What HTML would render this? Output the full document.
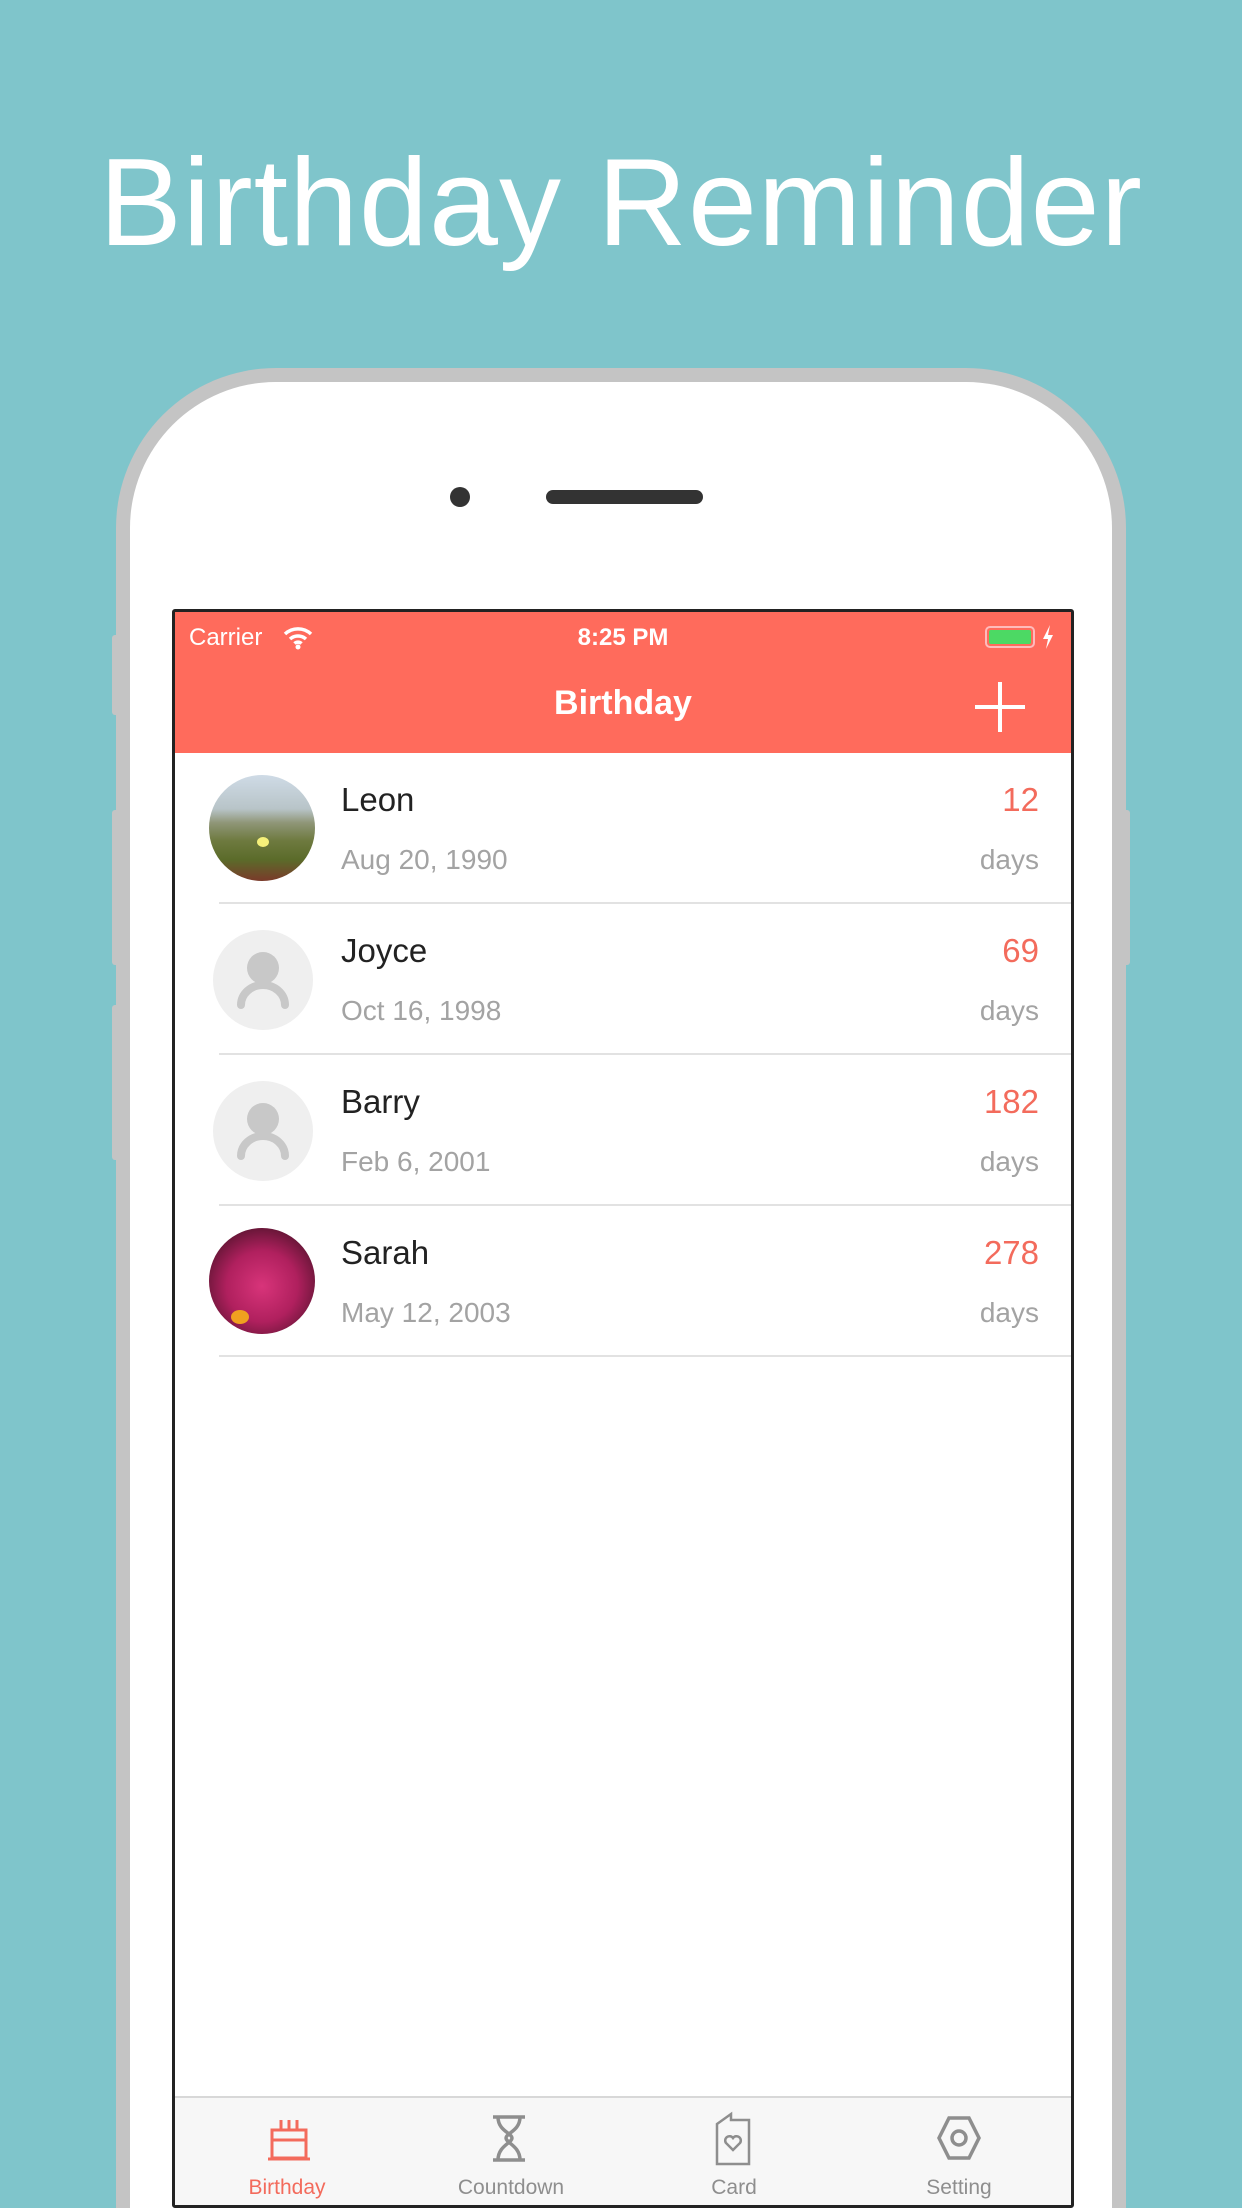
<!DOCTYPE html>
<html style="width:1242px;height:2208px;overflow:hidden"><head><meta charset="utf-8"><style>
*{margin:0;padding:0;box-sizing:border-box}
html,body{width:1242px;height:2208px;overflow:hidden}
body{background:#7fc5cb;font-family:"Liberation Sans",sans-serif}
#wrap{position:relative;width:1242px;height:2208px;overflow:hidden}
.title{position:absolute;left:0;width:1242px;top:128px;text-align:center;color:#fff;font-size:124px;line-height:150px;letter-spacing:1px}
.phone{position:absolute;left:116px;top:368px;width:1010px;height:1840px;border:14px solid #c4c4c4;border-bottom:none;border-radius:160px 160px 0 0;background:#fff}
.cam{position:absolute;left:450px;top:487px;width:20px;height:20px;border-radius:50%;background:#333}
.spk{position:absolute;left:546px;top:490px;width:157px;height:14px;border-radius:7px;background:#333}
.btn{position:absolute;width:8px;background:#c4c4c4;border-radius:3px}
.screen{position:absolute;left:172px;top:609px;width:902px;height:1599px;border:3px solid #222;background:#fff;overflow:hidden;border-radius:3px}
.nav{position:absolute;left:0;top:0;width:100%;height:141px;background:#ff6b5c;color:#fff}
.row{position:absolute;left:0;width:100%;height:151px}
.av{position:absolute;left:34px;top:22px;width:106px;height:106px;border-radius:50%;overflow:hidden}
.name{position:absolute;left:166px;top:28px;font-size:33px;color:#222}
.date{position:absolute;left:166px;top:91px;font-size:28px;color:#a3a3a3}
.num{position:absolute;right:32px;top:28px;font-size:33px;color:#f36b5c}
.days{position:absolute;right:32px;top:91px;font-size:28px;color:#a3a3a3}
.sep{position:absolute;left:44px;right:0;bottom:0;height:2px;background:#e2e2e2}
.tab{position:absolute;left:0;top:1484px;width:100%;height:115px;background:#f7f7f7;border-top:2px solid #d8d8d8}
.tl{position:absolute;top:78px;width:200px;text-align:center;font-size:21px;color:#8e8e8e}
</style></head><body><div id="wrap">
<div class="title">Birthday Reminder</div>
<div class="phone"></div>
<div class="btn" style="left:112px;top:635px;height:80px"></div>
<div class="btn" style="left:112px;top:810px;height:155px"></div>
<div class="btn" style="left:112px;top:1005px;height:155px"></div>
<div class="btn" style="left:1122px;top:810px;height:155px"></div>
<div class="cam"></div><div class="spk"></div>
<div class="screen">
 <div class="nav">
  <div style="position:absolute;left:14px;top:12px;font-size:24px">Carrier</div>
  <svg style="position:absolute;left:108px;top:14px" width="30" height="24" viewBox="0 0 30 24"><path d="M2 8a19 19 0 0 1 26 0M7 13a12 12 0 0 1 16 0M11.5 17.5a5 5 0 0 1 7 0" stroke="#fff" stroke-width="3.5" fill="none"/><circle cx="15" cy="21" r="2.5" fill="#fff"/></svg>
  <div style="position:absolute;left:0;width:100%;top:12px;text-align:center;font-size:24px;font-weight:bold">8:25 PM</div>
  <div style="position:absolute;left:810px;top:14px;width:50px;height:22px;border:2px solid #fbb;border-radius:5px;padding:2px"><div style="width:100%;height:100%;background:#4cd964;border-radius:2px"></div></div>
  <svg style="position:absolute;left:866px;top:12px" width="14" height="26" viewBox="0 0 14 26"><path d="M9 1L2 15h5l-2 10 7-14H7z" fill="#fff"/></svg>
  <div style="position:absolute;left:0;width:100%;top:72px;text-align:center;font-size:34px;font-weight:bold">Birthday</div>
  <svg style="position:absolute;left:798px;top:68px" width="54" height="54" viewBox="0 0 54 54"><path d="M27 2v50M2 27h50" stroke="#fff" stroke-width="4"/></svg>
 </div>
 <div class="row" style="top:141px">
  <div class="av" style="background:linear-gradient(180deg,#cfdbe6 0%,#b8c4c8 32%,#8f9678 45%,#6e7a3f 62%,#5b6b2a 80%,#7a3a2a 100%)"><div style="position:absolute;left:48px;top:62px;width:12px;height:10px;border-radius:50%;background:#f5f07a"></div></div>
  <div class="name">Leon</div><div class="date">Aug 20, 1990</div><div class="num">12</div><div class="days">days</div><div class="sep"></div>
 </div>
 <div class="row" style="top:292px">
  <div class="av" style="background:#efefef;left:38px;top:26px;width:100px;height:100px"><svg width="100" height="100" viewBox="0 0 100 100"><circle cx="50" cy="38" r="16" fill="#c8c8c8"/><path d="M28 75a22 20 0 0 1 44 0" stroke="#c8c8c8" stroke-width="8" fill="none" stroke-linecap="round"/></svg></div>
  <div class="name">Joyce</div><div class="date">Oct 16, 1998</div><div class="num">69</div><div class="days">days</div><div class="sep"></div>
 </div>
 <div class="row" style="top:443px">
  <div class="av" style="background:#efefef;left:38px;top:26px;width:100px;height:100px"><svg width="100" height="100" viewBox="0 0 100 100"><circle cx="50" cy="38" r="16" fill="#c8c8c8"/><path d="M28 75a22 20 0 0 1 44 0" stroke="#c8c8c8" stroke-width="8" fill="none" stroke-linecap="round"/></svg></div>
  <div class="name">Barry</div><div class="date">Feb 6, 2001</div><div class="num">182</div><div class="days">days</div><div class="sep"></div>
 </div>
 <div class="row" style="top:594px">
  <div class="av" style="background:radial-gradient(circle at 50% 55%,#d8347a 0%,#b0205e 45%,#5a1430 80%,#2a1a18 100%)"><div style="position:absolute;left:22px;top:82px;width:18px;height:14px;border-radius:50%;background:#f0a020"></div></div>
  <div class="name">Sarah</div><div class="date">May 12, 2003</div><div class="num">278</div><div class="days">days</div><div class="sep"></div>
 </div>
 <div class="tab">
  <svg style="position:absolute;left:89px;top:18px" width="50" height="46" viewBox="0 0 50 46" fill="none" stroke="#f36b5c" stroke-width="3"><path d="M8 14h34v28H8zM8 24h34M4 43h42M17 4v10M25 4v10M33 4v10"/></svg>
  <div class="tl" style="left:12px;color:#f36b5c">Birthday</div>
  <svg style="position:absolute;left:314px;top:16px" width="40" height="50" viewBox="0 0 40 50" fill="none" stroke="#8e8e8e" stroke-width="3.5"><path d="M4 3h32M4 46h32M9 3c0 14 14 16 14 21S9 32 9 46M31 3c0 14-14 16-14 21s14 8 14 22"/></svg>
  <div class="tl" style="left:236px">Countdown</div>
  <svg style="position:absolute;left:538px;top:12px" width="40" height="56" viewBox="0 0 40 56" fill="none" stroke="#8e8e8e" stroke-width="2.5"><path d="M4 14l14-10v6h18v44H4zM4 14v40"/><path d="M20 40l-7-7a4 4 0 0 1 7-5 4 4 0 0 1 7 5z"/></svg>
  <div class="tl" style="left:459px">Card</div>
  <svg style="position:absolute;left:760px;top:16px" width="48" height="48" viewBox="0 0 48 48" fill="none" stroke="#8e8e8e" stroke-width="3.5"><path d="M14 4h20l10 20-10 20H14L4 24z"/><circle cx="24" cy="24" r="7"/></svg>
  <div class="tl" style="left:684px">Setting</div>
 </div>
</div>
</div></body></html>
